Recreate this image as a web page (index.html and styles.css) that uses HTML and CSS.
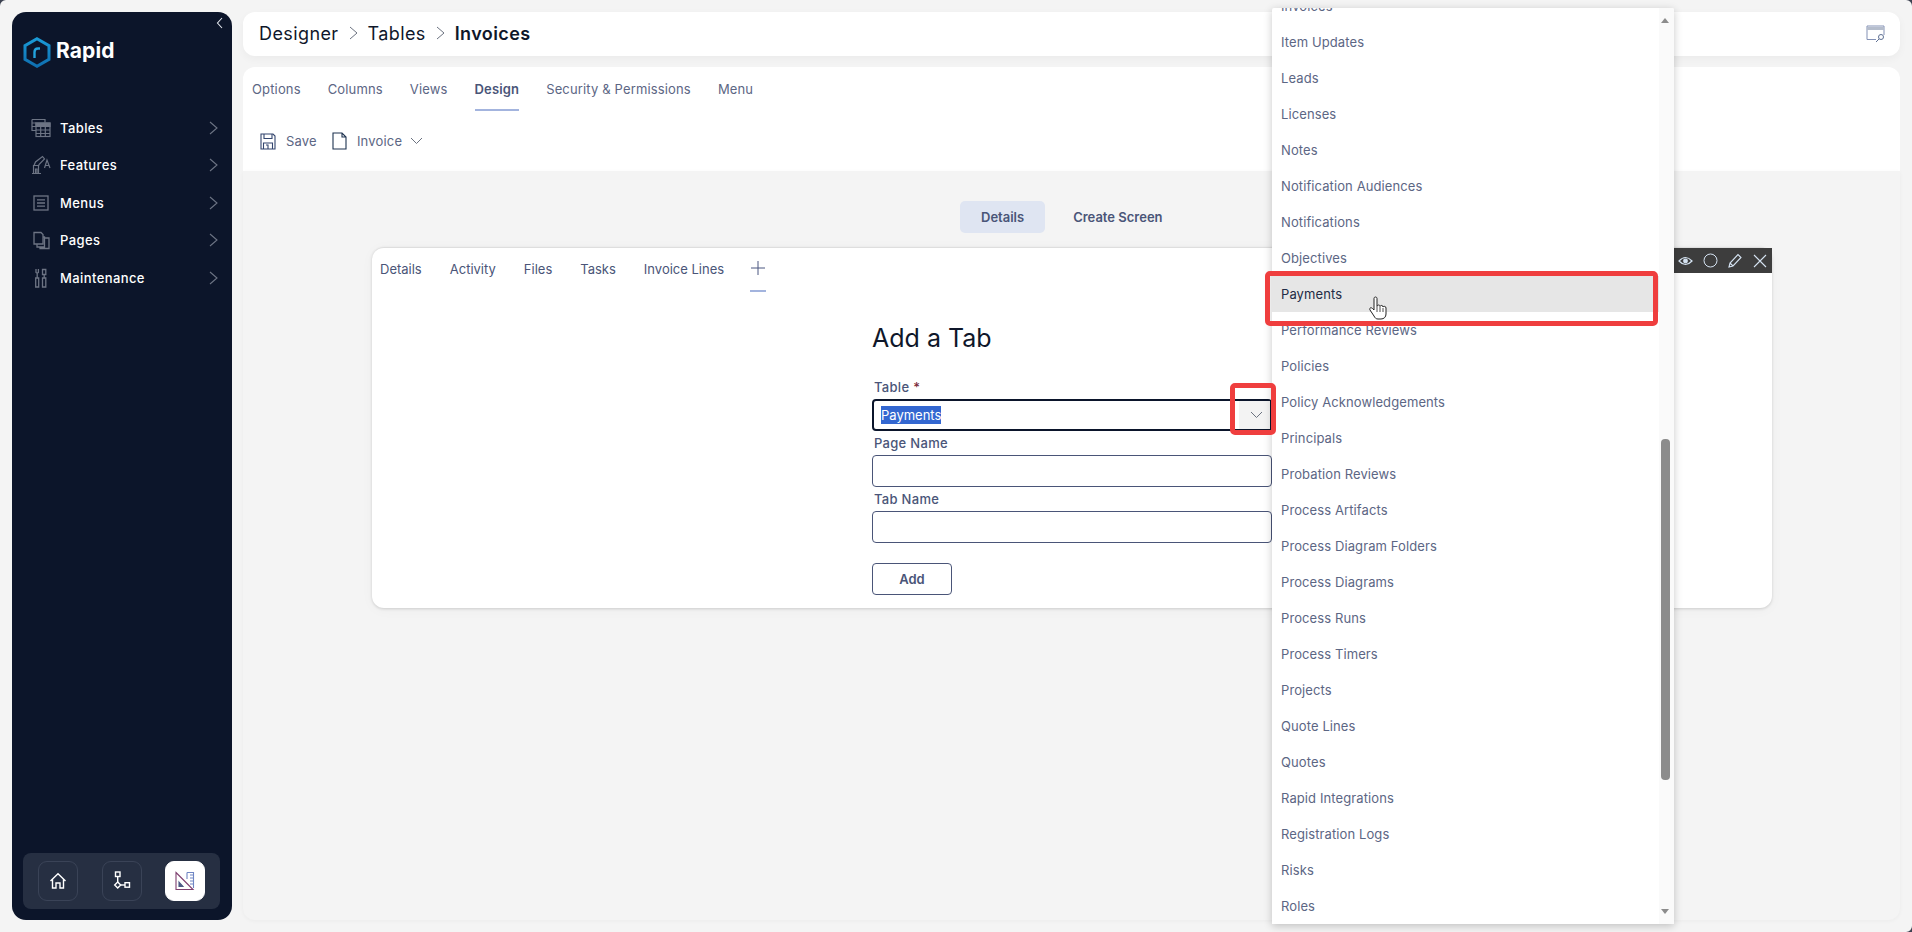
FILE: index.html
```html
<!DOCTYPE html>
<html lang="en">
<head>
    <meta charset="UTF-8">
    <title>Rapid Designer</title>
    <link rel="stylesheet" href="styles.css">
</head>
<body>
<div class="shell">
    <!-- Sidebar -->
    <aside class="sidebar">
        <svg class="collapse" width="8" height="12" viewBox="0 0 8 12"><path d="M6 1 1.5 6 6 11" fill="none" stroke="#e4e7ee" stroke-width="1.1"/></svg>
        <div class="logo">
            <svg width="28" height="31" viewBox="0 0 28 31">
                <defs><linearGradient id="hex" x1="0" y1="0" x2="0" y2="1"><stop offset="0" stop-color="#1a9ad6"/><stop offset="1" stop-color="#0f6fb0"/></linearGradient></defs>
                <path d="M14 1.800 26 8.700V22.300L14 29.200 2 22.300V8.700Z" fill="none" stroke="url(#hex)" stroke-width="3"/>
                <path d="M11.500 21V15Q11.500 11.500 15 11.500H17" fill="none" stroke="#23a3dd" stroke-width="2.4"/>
            </svg>
            <span class="logo-text">Rapid</span>
        </div>
        <nav class="nav">
            <a class="nav-item">
                <svg class="nav-icon" width="20" height="20" viewBox="0 0 20 20" fill="none" stroke="#6d7484" stroke-width="1.2"><path d="M1 1.500h13v3M1 1.500v11h4M1 5h4M1 8.500h4"/><rect x="5" y="5" width="14" height="13.500" fill="#0c152a"/><path d="M5 8.500h14M5 12h14M5 15.500h14M9.700 8.500v10M14.300 8.500v10" /><path d="M5 5h14v3.500H5z" fill="#6d7484"/></svg>
                <span>Tables</span>
                <svg class="nav-arrow" width="9" height="14" viewBox="0 0 9 14"><path d="M1 1l7 6-7 6" fill="none" stroke="#6d7484" stroke-width="1.1"/></svg>
            </a>
            <a class="nav-item">
                <svg class="nav-icon" width="20" height="20" viewBox="0 0 20 20" fill="none" stroke="#6d7484" stroke-width="1.2"><path d="M1 18.500h9M2.500 18.500V10.500h5v8M3 10.500l1.500-3.500 7-5.500 2 2.500-5.500 5.500v1M4.500 18.500v-4.500h1.500v4.500M13.500 13l2.500-8 3 8M14.500 10.500h3.500"/></svg>
                <span>Features</span>
                <svg class="nav-arrow" width="9" height="14" viewBox="0 0 9 14"><path d="M1 1l7 6-7 6" fill="none" stroke="#6d7484" stroke-width="1.1"/></svg>
            </a>
            <a class="nav-item">
                <svg class="nav-icon" width="20" height="20" viewBox="0 0 20 20" fill="none" stroke="#6d7484" stroke-width="1.300"><rect x="3" y="3" width="14" height="14"/><path d="M6 6.800h8M6 10h8M6 13.200h8"/></svg>
                <span>Menus</span>
                <svg class="nav-arrow" width="9" height="14" viewBox="0 0 9 14"><path d="M1 1l7 6-7 6" fill="none" stroke="#6d7484" stroke-width="1.1"/></svg>
            </a>
            <a class="nav-item">
                <svg class="nav-icon" width="20" height="20" viewBox="0 0 20 20" fill="none" stroke="#6d7484" stroke-width="1.300"><path d="M3 2.500h7l2 2v9.500H3zM6 14v3h7.500V7H12M9 17v1.500h9V8h-4.500"/></svg>
                <span>Pages</span>
                <svg class="nav-arrow" width="9" height="14" viewBox="0 0 9 14"><path d="M1 1l7 6-7 6" fill="none" stroke="#6d7484" stroke-width="1.1"/></svg>
            </a>
            <a class="nav-item">
                <svg class="nav-icon" width="20" height="20" viewBox="0 0 20 20" fill="none" stroke="#6d7484" stroke-width="1.300"><path d="M5 1v3.500l1.200.8 1.200-.8V1M6.200 5.300V10M4.700 10h3v9h-3zM11.500 1.500h3.300v5h-3.300zM13.200 6.500V10M11.500 10h3.300v9h-3.300z"/></svg>
                <span>Maintenance</span>
                <svg class="nav-arrow" width="9" height="14" viewBox="0 0 9 14"><path d="M1 1l7 6-7 6" fill="none" stroke="#6d7484" stroke-width="1.1"/></svg>
            </a>
        </nav>
        <div class="switcher">
            <button class="switch-btn">
                <svg width="18" height="18" viewBox="0 0 18 18" fill="none" stroke="#fff" stroke-width="1.400"><path d="M1.500 9 9 1.800 16.500 9M3.500 7.500V16h3.500v-5h4v5h3.500V7.500"/></svg>
            </button>
            <button class="switch-btn">
                <svg width="18" height="20" viewBox="0 0 18 20" fill="none" stroke="#fff" stroke-width="1.400"><rect x="2.500" y="1" width="4.500" height="4.500"/><path d="M4.700 5.500v5.500"/><path d="M4.700 11l3 3-3 3-3-3z"/><path d="M7.700 14H12"/><rect x="12" y="11.700" width="4.500" height="4.500"/></svg>
            </button>
            <button class="switch-btn active">
                <svg width="20" height="20" viewBox="0 0 20 20" fill="none" stroke="#4d5a85" stroke-width="1.100"><path d="M1 1.500 18 18.500H1z" stroke="#7d3f6f"/><path d="M4 11l4 4.500H4z" fill="#4d5a85"/><path d="M12 1.500h6.500v15.500" stroke="#6f86c4"/><path d="M12 1.500v6.500M15 4h3M15 7h3M15 10h3M15 13h3" stroke="#6f86c4"/></svg>
            </button>
        </div>
    </aside>

    <main class="main">
        <header class="topbar">
            <div class="crumbs">
                <span>Designer</span>
                <svg width="9" height="14" viewBox="0 0 9 14"><path d="M1 1l7 6-7 6" fill="none" stroke="#6b7280" stroke-width="1"/></svg>
                <span>Tables</span>
                <svg width="9" height="14" viewBox="0 0 9 14"><path d="M1 1l7 6-7 6" fill="none" stroke="#6b7280" stroke-width="1"/></svg>
                <strong>Invoices</strong>
            </div>
            <svg class="topbar-icon" width="19" height="18" viewBox="0 0 19 18" fill="none" stroke="#8391b5" stroke-width="1"><path d="M10 14.500H1V1h17v9"/><path d="M1 2h17v3H1z" fill="#b5bdcc" stroke="none"/><circle cx="15" cy="12" r="2.500" stroke="#5e7093"/><path d="M13 14l-3 3" stroke="#5e7093"/></svg>
        </header>

        <section class="panel">
            <div class="tabs">
                <a class="tab">Options</a>
                <a class="tab">Columns</a>
                <a class="tab">Views</a>
                <a class="tab active">Design</a>
                <a class="tab">Security &amp; Permissions</a>
                <a class="tab">Menu</a>
            </div>
            <div class="toolbar">
                <a class="tool">
                    <svg width="16" height="17" viewBox="0 0 16 17" fill="none" stroke="#33456e" stroke-width="1.100"><path d="M1 1h12l2 2v13H1z"/><path d="M4 1v4.500h8V1M3.500 16v-6h9v6M6 12h2v4"/></svg>
                    Save
                </a>
                <a class="tool">
                    <svg width="15" height="18" viewBox="0 0 15 18" fill="none" stroke="#1e3350" stroke-width="1.100"><path d="M1 1h9l4 4v12H1zM10 1v4h4"/></svg>
                    Invoice
                    <svg class="tool-caret" width="13" height="8" viewBox="0 0 13 8"><path d="M1 1l5.500 5.500L12 1" fill="none" stroke="#6b7280" stroke-width="1"/></svg>
                </a>
            </div>
        </section>

        <div class="canvas">
            <div class="switch">
                <a class="switch-tab active">Details</a>
                <a class="switch-tab">Create Screen</a>
            </div>
            <section class="card">
                <div class="card-tabs">
                    <a class="card-tab">Details</a>
                    <a class="card-tab">Activity</a>
                    <a class="card-tab">Files</a>
                    <a class="card-tab">Tasks</a>
                    <a class="card-tab">Invoice Lines</a>
                    <a class="card-tab card-add">
                        <svg width="14" height="14" viewBox="0 0 14 14"><path d="M7 0v14M0 7h14" stroke="#4a5680" stroke-width="1"/></svg>
                    </a>
                </div>
                <form class="tab-form">
                    <h2>Add a Tab</h2>
                    <label class="field-label">Table <span class="req">*</span></label>
                    <div class="input focused">
                        <span class="selected">Payments</span>
                        <span class="select-btn">
                            <svg width="13" height="8" viewBox="0 0 13 8"><path d="M1 1l5.500 5.500L12 1" fill="none" stroke="#6b7280" stroke-width="1"/></svg>
                        </span>
                    </div>
                    <label class="field-label">Page Name</label>
                    <div class="input"></div>
                    <label class="field-label">Tab Name</label>
                    <div class="input"></div>
                    <button type="button" class="add-btn">Add</button>
                </form>
                <div class="card-tools">
                    <svg width="15" height="10" viewBox="0 0 15 10" fill="none" stroke="#d5e3f2" stroke-width="1.200"><path d="M1 5q6.500-7 13 0-6.500 7-13 0z"/><circle cx="7.500" cy="5" r="1.800" fill="#d5e3f2"/></svg>
                    <svg width="15" height="15" viewBox="0 0 15 15" fill="none" stroke="#d5e3f2" stroke-width="1"><circle cx="7.500" cy="7.500" r="6.500"/></svg>
                    <svg width="15" height="15" viewBox="0 0 15 15" fill="none" stroke="#d5e3f2" stroke-width="1.100"><path d="M1 14l1-4 8-8.500 3 3-8 8.500zM2 10l3 3" /></svg>
                    <svg width="14" height="14" viewBox="0 0 14 14" fill="none" stroke="#d5e3f2" stroke-width="1.100"><path d="M1 1l12 12M13 1 1 13"/></svg>
                </div>
            </section>
        </div>
    </main>
</div>

<!-- Open select list, sits over the page -->
<div class="dropdown">
    <ul class="options">
        <li>Invoices</li>
        <li>Item Updates</li>
        <li>Leads</li>
        <li>Licenses</li>
        <li>Notes</li>
        <li>Notification Audiences</li>
        <li>Notifications</li>
        <li>Objectives</li>
        <li class="hover">Payments</li>
        <li>Performance Reviews</li>
        <li>Policies</li>
        <li>Policy Acknowledgements</li>
        <li>Principals</li>
        <li>Probation Reviews</li>
        <li>Process Artifacts</li>
        <li>Process Diagram Folders</li>
        <li>Process Diagrams</li>
        <li>Process Runs</li>
        <li>Process Timers</li>
        <li>Projects</li>
        <li>Quote Lines</li>
        <li>Quotes</li>
        <li>Rapid Integrations</li>
        <li>Registration Logs</li>
        <li>Risks</li>
        <li>Roles</li>
    </ul>
    <div class="scrollbar">
        <span class="arrow-up"></span>
        <span class="thumb"></span>
        <span class="arrow-down"></span>
    </div>
</div>

<!-- Annotations drawn on the screenshot -->
<div class="mark mark-chevron"></div>
<div class="mark mark-option"></div>
<svg class="cursor" width="20" height="25" viewBox="0 0 20 25"><path d="M5 2.500c0-2 3-2 3 0v8c.5-2 3-2 3 0 .5-1.500 3-1.500 3 .5 .5-1 3-1 3 1v6c0 3-2 5-5 5H9c-2 0-3-1-4-3L1 14c-1-2 1-3 2.500-1.500L5 14z" fill="#fff" stroke="#222" stroke-width="1"/><path d="M8 11v5M11 11v5M14 12v4" stroke="#222" stroke-width=".8"/></svg>
<span class="corner corner-tl"></span>
<span class="corner corner-tr"></span>
<span class="corner corner-br"></span>
</body>
</html>
```
FILE: styles.css
```css
* {
    margin: 0;
    padding: 0;
    box-sizing: border-box;
}

body {
    font-family: "Inter", "Liberation Sans", sans-serif;
    background: #f4f4f4;
    color: #4a5578;
    width: 1912px;
    height: 932px;
    overflow: hidden;
    position: relative;
}

.shell {
    display: flex;
    gap: 11px;
    height: 932px;
    padding: 12px;
}

/* Sidebar */
.sidebar {
    position: relative;
    width: 220px;
    flex-shrink: 0;
    background: #0c152a;
    border-radius: 14px;
    display: flex;
    flex-direction: column;
    padding: 24px 12px 11px 11px;
}

.collapse {
    position: absolute;
    top: 5px;
    right: 8px;
}

.logo {
    display: flex;
    align-items: center;
    gap: 5px;
    height: 32px;
    margin-bottom: 41px;
}

.logo-text {
    color: #fff;
    font-size: 21px;
    font-weight: 700;
    letter-spacing: 0.1px;
    margin-top: -3px;
}

.nav {
    display: flex;
    flex-direction: column;
    flex: 1;
    padding: 0 2px 0 8px;
}

.nav-item {
    display: flex;
    align-items: center;
    height: 37.5px;
    color: #fff;
    font-size: 13px;
    font-weight: 500;
    letter-spacing: 0.4px;
}

.nav-icon {
    margin-right: 9px;
}

.nav-arrow {
    margin-left: auto;
}

.switcher {
    display: flex;
    justify-content: space-between;
    height: 56px;
    background: #262f42;
    border-radius: 8px;
    padding: 8px 15px;
}

.switch-btn {
    width: 40px;
    height: 40px;
    background: none;
    border: 1px solid #3a4357;
    border-radius: 9px;
    display: flex;
    align-items: center;
    justify-content: center;
}

.switch-btn.active {
    background: #fff;
    border-color: #fff;
}

/* Main column */
.main {
    flex: 1;
    display: flex;
    flex-direction: column;
    min-width: 0;
}

.topbar {
    height: 44px;
    background: #fff;
    border-radius: 12px;
    box-shadow: 0 3px 8px rgba(0, 0, 0, 0.04);
    display: flex;
    align-items: center;
    justify-content: space-between;
    padding: 0 15px 0 16px;
    margin-bottom: 11px;
}

.crumbs {
    display: flex;
    align-items: center;
    gap: 10px;
    font-size: 18px;
    letter-spacing: 0.4px;
    color: #0f172a;
    margin-top: -2px;
}

.crumbs strong {
    font-weight: 600;
}

.panel {
    height: 104px;
    background: #fff;
    border-radius: 12px 12px 0 0;
    padding: 0 9px;
}

.tabs {
    display: flex;
    height: 44px;
    align-items: flex-start;
}

.tab {
    height: 44px;
    line-height: 44px;
    margin-right: 27px;
    font-size: 13px;
    letter-spacing: 0.15px;
    color: #5c6684;
}

.tab.active {
    font-weight: 600;
    color: #4a5578;
    border-bottom: 2px solid #a3b4de;
}

.toolbar {
    display: flex;
    align-items: center;
    gap: 15px;
    height: 60px;
    padding: 0 8px 0 8px;
}

.tool {
    display: flex;
    align-items: center;
    gap: 10px;
    font-size: 13px;
    letter-spacing: 0.2px;
    color: #5c6684;
}

.tool-caret {
    margin-left: -2px;
}

.canvas {
    flex: 1;
    background: #f4f4f4;
    border-radius: 0 0 12px 12px;
    box-shadow: 0 1px 4px rgba(0, 0, 0, 0.04);
    padding-top: 30px;
}

.switch {
    display: flex;
    gap: 8px;
    margin-left: 717px;
    margin-bottom: 14px;
}

.switch-tab {
    height: 32px;
    line-height: 32px;
    padding: 0 21px 0 20px;
    font-size: 13px;
    font-weight: 600;
    border-radius: 5px;
}

.switch-tab.active {
    padding: 0 21px;
    background: #dfe5f2;
}

.card {
    position: relative;
    width: 1400px;
    height: 361px;
    margin-left: 129px;
    background: #fff;
    border-radius: 12px;
    border-top: 1px solid #dedede;
    box-shadow: 0 1px 3px rgba(0, 0, 0, 0.15), 0 2px 14px rgba(0, 0, 0, 0.03);
}

.card-tabs {
    display: flex;
    padding-left: 8px;
    height: 44px;
}

.card-tab {
    margin-right: 28px;
    line-height: 43px;
    font-size: 13px;
}

.card-add {
    width: 16px;
    height: 44px;
    margin-left: -2px;
    border-bottom: 2px solid #a3b4de;
    line-height: 1;
    padding-top: 13px;
    padding-left: 1px;
}

.tab-form {
    width: 400px;
    margin-left: 500px;
    padding-top: 31px;
}

.tab-form h2 {
    font-size: 25px;
    font-weight: 400;
    color: #0f172a;
    line-height: 30px;
    margin-bottom: 27px;
}

.field-label {
    display: block;
    height: 14px;
    line-height: 14px;
    padding-left: 2px;
    font-size: 13px;
    font-weight: 500;
    letter-spacing: 0.3px;
    color: #4a5578;
    margin-bottom: 5px;
}

.req {
    color: #7a2a3a;
}

.input {
    height: 32px;
    border: 1px solid #4a5578;
    border-radius: 4px;
    margin-bottom: 5px;
}

.input.focused {
    display: flex;
    align-items: center;
    justify-content: space-between;
    border: 2px solid #0b152b;
    padding-left: 7px;
}

.selected {
    background: #3367d1;
    color: #fff;
    font-size: 13px;
    line-height: 18px;
}

.select-btn {
    width: 31px;
    height: 28px;
    padding-left: 3px;
    background: #f3f3f3;
    display: flex;
    align-items: center;
    justify-content: center;
}

.add-btn {
    display: block;
    width: 80px;
    height: 32px;
    margin-top: 20px;
    background: #fff;
    border: 1px solid #4a5578;
    border-radius: 4px;
    font: 600 13px "Inter", sans-serif;
    color: #4a5578;
}

.card-tools {
    position: absolute;
    top: 0;
    right: 0;
    width: 98px;
    height: 25px;
    background: #3d3d3d;
    display: flex;
    align-items: center;
    justify-content: flex-end;
    gap: 10px;
    padding-right: 5px;
}

/* Dropdown over the page */
.dropdown {
    position: absolute;
    top: 8px;
    left: 1272px;
    width: 402px;
    height: 916px;
    background: #fff;
    overflow: hidden;
    display: flex;
    box-shadow: 0 2px 8px rgba(0, 0, 0, 0.22);
    border-radius: 2px 2px 0 0;
}

.options {
    list-style: none;
    flex: 1;
    margin-top: -20px;
}

.options li {
    height: 36px;
    line-height: 37px;
    padding-left: 9px;
    font-size: 13px;
    letter-spacing: 0.1px;
    color: #5c6684;
}

.options li.hover {
    background: #e6e6e6;
    color: #222b45;
}

.scrollbar {
    position: relative;
    width: 15px;
    background: #fafafa;
}

.thumb {
    position: absolute;
    top: 431px;
    left: 2px;
    width: 9px;
    height: 341px;
    background: #8c8c8c;
    border-radius: 4px;
}

.arrow-up,
.arrow-down {
    position: absolute;
    left: 2px;
    border-left: 4.5px solid transparent;
    border-right: 4.5px solid transparent;
}

.arrow-up {
    top: 10px;
    border-bottom: 5px solid #8c8c8c;
}

.arrow-down {
    bottom: 10px;
    border-top: 5px solid #8c8c8c;
}

/* Red annotation boxes */
.mark {
    position: absolute;
    border: 5px solid #ef3e3e;
    border-radius: 5px;
}

.mark-chevron {
    left: 1230px;
    top: 383px;
    width: 46px;
    height: 52px;
}

.mark-option {
    left: 1265px;
    top: 271px;
    width: 393px;
    height: 55px;
}

.cursor {
    position: absolute;
    left: 1369px;
    top: 296px;
}

.corner {
    position: absolute;
    width: 6px;
    height: 6px;
    background: #3c4150;
}

.corner-tl {
    top: 0;
    left: 0;
    clip-path: path("M0 0H6A6 6 0 0 0 0 6Z");
}

.corner-tr {
    top: 0;
    right: 0;
    clip-path: path("M0 0H6V6A6 6 0 0 0 0 0Z");
}

.corner-br {
    bottom: 0;
    right: 0;
    clip-path: path("M6 0V6H0A6 6 0 0 0 6 0Z");
}
```
